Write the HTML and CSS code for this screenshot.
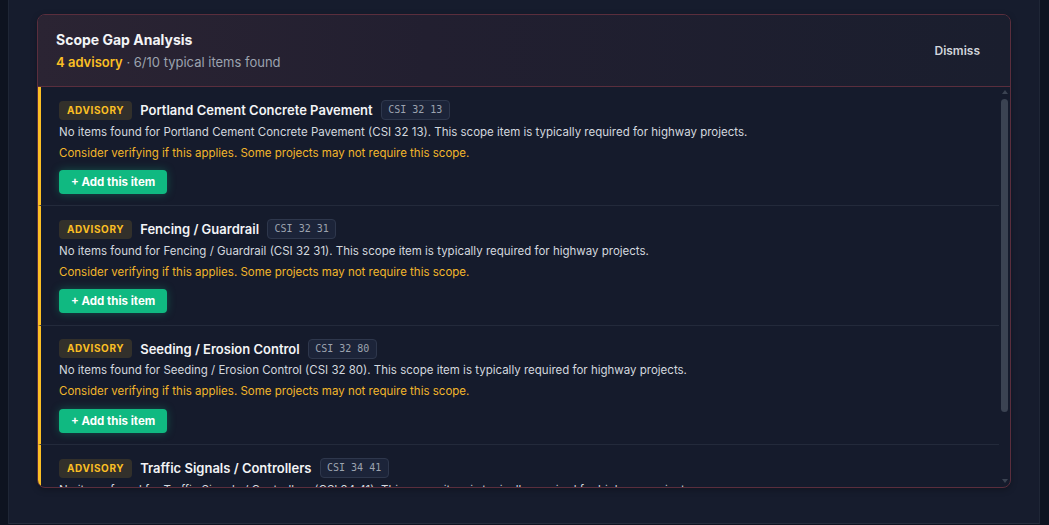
FILE: index.html
```html
<!DOCTYPE html>
<html lang="en">
<head>
<meta charset="utf-8">
<title>Scope Gap Analysis</title>
<link rel="stylesheet" href="styles.css">
</head>
<body>
<div class="shell">
  <section class="card">
    <header class="card-head">
      <div class="head-text">
        <h2 class="title">Scope Gap Analysis</h2>
        <p class="sub"><span class="count">4 advisory</span> · 6/10 typical items found</p>
      </div>
      <button class="dismiss">Dismiss</button>
    </header>
    <div class="list-wrap">
      <div class="list">
        <article class="item">
          <div class="row">
            <span class="badge">ADVISORY</span>
            <span class="name">Portland Cement Concrete Pavement</span>
            <span class="code">CSI 32 13</span>
          </div>
          <p class="desc">No items found for Portland Cement Concrete Pavement (CSI 32 13). This scope item is typically required for highway projects.</p>
          <p class="note">Consider verifying if this applies. Some projects may not require this scope.</p>
          <button class="add">+ Add this item</button>
        </article>
        <article class="item">
          <div class="row">
            <span class="badge">ADVISORY</span>
            <span class="name">Fencing / Guardrail</span>
            <span class="code">CSI 32 31</span>
          </div>
          <p class="desc">No items found for Fencing / Guardrail (CSI 32 31). This scope item is typically required for highway projects.</p>
          <p class="note">Consider verifying if this applies. Some projects may not require this scope.</p>
          <button class="add">+ Add this item</button>
        </article>
        <article class="item">
          <div class="row">
            <span class="badge">ADVISORY</span>
            <span class="name">Seeding / Erosion Control</span>
            <span class="code">CSI 32 80</span>
          </div>
          <p class="desc">No items found for Seeding / Erosion Control (CSI 32 80). This scope item is typically required for highway projects.</p>
          <p class="note">Consider verifying if this applies. Some projects may not require this scope.</p>
          <button class="add">+ Add this item</button>
        </article>
        <article class="item">
          <div class="row">
            <span class="badge">ADVISORY</span>
            <span class="name">Traffic Signals / Controllers</span>
            <span class="code">CSI 34 41</span>
          </div>
          <p class="desc">No items found for Traffic Signals / Controllers (CSI 34 41). This scope item is typically required for highway projects.</p>
          <p class="note">Consider verifying if this applies. Some projects may not require this scope.</p>
          <button class="add">+ Add this item</button>
        </article>
      </div>
      <div class="scrollbar" aria-hidden="true">
        <span class="arrow up"></span>
        <span class="thumb"></span>
        <span class="arrow down"></span>
      </div>
    </div>
  </section>
</div>
</body>
</html>
```

FILE: styles.css
```css
* { box-sizing: border-box; }
html, body {
  margin: 0;
  padding: 0;
  background: #0e1320;
  font-family: Inter, "Noto Sans", "Liberation Sans", sans-serif;
  color: #e5e7eb;
}
.shell {
  margin-left: 8px;
  width: 1032px;
  height: 524px;
  background: #161c2d;
  border-left: 1px solid #1f2636;
  border-right: 1px solid #1f2636;
  border-bottom: 1px solid #262d3d;
  padding: 14px 28px 0 28px;
}
.card {
  width: 974px;
  border: 1px solid #5a2e3d;
  border-radius: 8px;
  overflow: hidden;
  background: #151b2c;
  box-shadow: 0 2px 6px rgba(0,0,0,0.25);
}
.card-head {
  display: flex;
  align-items: center;
  justify-content: space-between;
  height: 72px;
  padding: 0 18px 0 18px;
  background: linear-gradient(90deg, #2b2433 0%, #221f30 40%, #1a1e2e 100%);
  border-bottom: 1px solid #5a2e3d;
}
.title {
  margin: 0;
  font-size: 14px;
  font-weight: 700;
  color: #f3f4f6;
  line-height: 20px;
}
.sub {
  margin: 2px 0 0;
  font-size: 13px;
  line-height: 20px;
  color: #9ca3af;
}
.count {
  color: #fbbf24;
  font-weight: 600;
}
.dismiss {
  background: none;
  border: 0;
  padding: 6px 12px;
  font-family: inherit;
  font-size: 12px;
  font-weight: 600;
  color: #d1d5db;
  cursor: pointer;
}
.list-wrap {
  position: relative;
}
.list {
  height: 400px;
  overflow: hidden;
  padding-right: 11px;
}
.scrollbar {
  position: absolute;
  top: 0;
  bottom: 0;
  right: 2px;
  width: 7px;
  display: flex;
  flex-direction: column;
  align-items: center;
}
.arrow {
  width: 0;
  height: 0;
  border-left: 3.5px solid transparent;
  border-right: 3.5px solid transparent;
}
.arrow.up {
  margin-top: 3px;
  border-bottom: 4px solid #3b4352;
}
.arrow.down {
  margin-top: auto;
  margin-bottom: 4px;
  border-top: 4px solid #3b4352;
}
.thumb {
  margin-top: 5px;
  width: 7px;
  height: 313px;
  border-radius: 4px;
  background: #3b4352;
}
.item {
  border-left: 3px solid #fbbf24;
  border-bottom: 1px solid #232a3b;
  padding: 12px 16px 11.4px 18px;
}
.row {
  display: flex;
  align-items: center;
  gap: 8px;
  height: 20px;
  margin-top: 1px;
}
.badge {
  display: inline-block;
  background: rgba(251,191,36,0.13);
  color: #fbbf24;
  font-size: 10px;
  font-weight: 700;
  letter-spacing: 0.6px;
  line-height: 19px;
  height: 19px;
  padding: 0 8px;
  border-radius: 4px;
}
.name {
  font-size: 13px;
  font-weight: 600;
  color: #f3f4f6;
}
.code {
  font-family: "DejaVu Sans Mono", "Liberation Mono", monospace;
  font-size: 10px;
  color: #9ca3af;
  background: #1c2439;
  border: 1px solid #2e374c;
  border-radius: 4px;
  height: 20px;
  line-height: 18px;
  padding: 0 6.5px;
}
.desc {
  margin: 2.5px 0 0;
  font-size: 11.5px;
  line-height: 18px;
  color: #d3d8df;
}
.note {
  margin: 3px 0 0;
  font-size: 11.5px;
  line-height: 18px;
  color: #f2b62b;
}
.add {
  margin-top: 8.5px;
  display: inline-block;
  height: 24px;
  padding: 0 12px;
  border: 0;
  border-radius: 4px;
  background: #10b981;
  color: #ffffff;
  font-family: inherit;
  font-size: 11.5px;
  font-weight: 700;
  box-shadow: 0 0 8px rgba(16,185,129,0.35);
  cursor: pointer;
}
```
